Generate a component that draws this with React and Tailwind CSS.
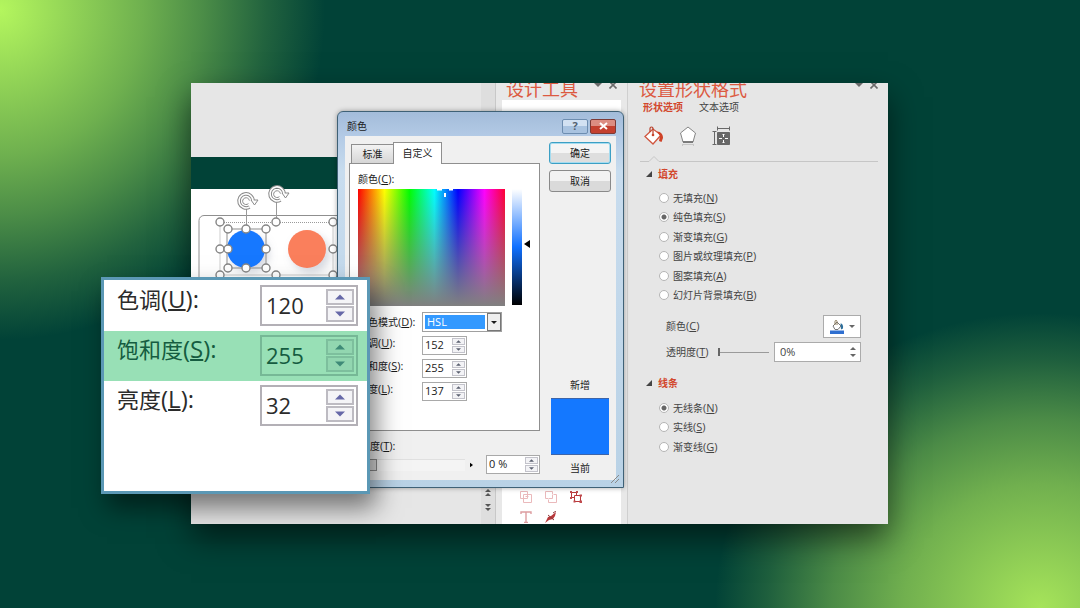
import React from "react";
import { useState } from "react";
import clsx from "clsx";

const FILL_OPTIONS = [
  { id: "none", text: "无填充", hotkey: "N" },
  { id: "solid", text: "纯色填充", hotkey: "S" },
  { id: "gradient", text: "渐变填充", hotkey: "G" },
  { id: "picture", text: "图片或纹理填充", hotkey: "P" },
  { id: "pattern", text: "图案填充", hotkey: "A" },
  { id: "background", text: "幻灯片背景填充", hotkey: "B" },
];

const LINE_OPTIONS = [
  { id: "none", text: "无线条", hotkey: "N" },
  { id: "solid", text: "实线", hotkey: "S" },
  { id: "gradient", text: "渐变线", hotkey: "G" },
];

const DIALOG_CHANNELS = [
  { id: "hue", text: "色调", hotkey: "U", value: "152" },
  { id: "sat", text: "饱和度", hotkey: "S", value: "255" },
  { id: "lum", text: "亮度", hotkey: "L", value: "137" },
];

const ZOOM_CHANNELS = [
  { id: "hue", text: "色调", hotkey: "U", value: "120" },
  { id: "sat", text: "饱和度", hotkey: "S", value: "255", active: true },
  { id: "lum", text: "亮度", hotkey: "L", value: "32" },
];

const HotkeyText = ({ text, hotkey, colon, large }) => (
  <>
    {text}
    <span className={large ? "text-[24px]" : "text-[11px]"}>
      (<u className="underline-offset-1">{hotkey}</u>){colon && ":"}
    </span>
  </>
);

const Arrow = ({ down, className }) => (
  <svg viewBox="0 0 8 4" className={className} fill="currentColor">
    <path d={down ? "M0 0h8L4 4z" : "M0 4h8L4 0z"} />
  </svg>
);

const Spinner = ({ id, value, className }) => (
  <div
    className={clsx(
      "flex h-[19px] border border-[#a9a9a9] bg-white p-px",
      className
    )}
  >
    <input
      id={id}
      defaultValue={value}
      className="min-w-0 flex-1 bg-transparent pl-px text-[11px] text-[#222] outline-none"
    />
    <div className="flex w-[13px] flex-col gap-px">
      <button
        aria-label="增加"
        className="flex flex-1 items-center justify-center border border-[#c3c3cb] bg-[#f3f3f6] text-[#5b6070]"
      >
        <Arrow className="h-[3px] w-[5px]" />
      </button>
      <button
        aria-label="减少"
        className="flex flex-1 items-center justify-center border border-[#c3c3cb] bg-[#f3f3f6] text-[#5b6070]"
      >
        <Arrow down className="h-[3px] w-[5px]" />
      </button>
    </div>
  </div>
);

const PaneControls = () => (
  <div className="flex items-center gap-[7px] text-[#6a6a6a]">
    <button aria-label="选项">
      <Arrow down className="h-[4px] w-[8px]" />
    </button>
    <button aria-label="关闭窗格">
      <svg viewBox="0 0 8 8" className="h-2 w-2" stroke="currentColor" strokeWidth="1.6">
        <path d="M0.5 0.5l7 7M7.5 0.5l-7 7" />
      </svg>
    </button>
  </div>
);

const RotateHandle = ({ x, y }) => (
  <g transform={`translate(${x} ${y})`} fill="none">
    <path d="M3.5 6A7 7 0 1 1 7 0" stroke="#8a8a8a" strokeWidth="3.6" />
    <path d="M5 -1h7L8.500 4z" fill="#fff" stroke="#8a8a8a" />
    <path d="M3.5 6A7 7 0 1 1 7 0" stroke="#fff" strokeWidth="1.6" />
    <path d="M2.4 2.6A3.4 3.4 0 1 1 3.4 -0.4" stroke="#8a8a8a" strokeWidth="1" />
  </g>
);

const Handle = ({ x, y }) => (
  <circle cx={x} cy={y} r="4" fill="#fff" stroke="#858585" strokeWidth="1.4" />
);

const SlideShapes = () => (
  <svg width="290" height="110" viewBox="0 0 290 110" className="block overflow-visible" fill="none">
    <defs>
      <filter id="dotShadow" x="-50%" y="-50%" width="200%" height="200%">
        <feDropShadow dx="4" dy="5" stdDeviation="4" floodColor="#8a93a8" floodOpacity="0.35" />
      </filter>
    </defs>
    <rect x="8" y="26.500" width="300" height="120" rx="5" stroke="#8f8f8f" />
    <circle cx="55" cy="60" r="19" fill="#1478ff" filter="url(#dotShadow)" />
    <circle cx="116" cy="60" r="19" fill="#fa7f5b" filter="url(#dotShadow)" />
    <rect x="29" y="33.5" width="113" height="52.5" stroke="#9a9a9a" strokeDasharray="1 1" />
    <rect x="36" y="40" width="39" height="39" stroke="#8d8d8d" />
    <path d="M55.500 18v20M85.500 11v20" stroke="#9a9a9a" />
    {[
      [29, 33], [85, 33], [142, 33], [29, 60], [142, 60], [29, 86], [85, 86], [142, 86],
      [37, 40], [55, 40], [75, 40], [37, 60], [75, 60], [37, 79], [55, 79], [75, 79],
    ].map(([x, y]) => (
      <Handle key={`${x}-${y}`} x={x} y={y} />
    ))}
    <RotateHandle x={55} y={12} />
    <RotateHandle x={86} y={5} />
  </svg>
);

const SlideArea = () => (
  <section className="flex min-w-0 flex-1 flex-col bg-[#e6e6e6]">
    <div className="h-[74px]" />
    <div className="h-8 bg-[#014237]" />
    <div className="h-[260px] overflow-visible bg-white">
      <SlideShapes />
    </div>
  </section>
);

const SlideScrollbar = () => (
  <div className="flex w-[15px] flex-col items-center justify-end gap-2 border-r border-[#c8c8c8] bg-[#dedede] pb-[13px] text-[#555]">
    {[false, true].map((down) => (
      <button key={String(down)} aria-label={down ? "下一张" : "上一张"} className="flex flex-col gap-px">
        <Arrow down={down} className="h-[3px] w-[6px]" />
        <Arrow down={down} className="h-[3px] w-[6px]" />
      </button>
    ))}
  </div>
);

const DesignTools = () => (
  <aside className="flex w-[132px] flex-col border-r border-[#cfcfcf] bg-[#e8e8e8] pr-[6px] pl-[6px]">
    <header className="flex h-3 items-center justify-between pr-[4px] pl-[4px]">
      <h2 className="text-[18px] leading-3 font-normal whitespace-nowrap text-[#dc5a41]">
        设计工具
      </h2>
      <div className="-mt-2">
        <PaneControls />
      </div>
    </header>
    <div className="mt-[5px] flex flex-1 items-end bg-white pb-px pl-[18px]">
      <div className="grid grid-cols-[repeat(3,12px)] gap-x-[13px] gap-y-2">
        <svg viewBox="0 0 12 12" className="h-3 w-3" fill="none" stroke="#eab9bb">
          <path d="M0.500 0.500h7v7h-7zM3.500 3.500h8v8h-8zM5.500 5.500h3" />
        </svg>
        <svg viewBox="0 0 12 12" className="h-3 w-3" fill="none" stroke="#eab9bb">
          <path d="M3.500 7.500h-3v-7h7v3M7.500 4v3.500H4M3.500 8.500v3h8v-8h-3" />
        </svg>
        <svg viewBox="0 0 12 12" className="h-3 w-3" fill="none" stroke="#b8383b">
          <path d="M1.500 1.500h5v5h-5z" />
          <path d="M4.500 4.500h6v6h-6z" fill="#fff" />
          <path d="M0 0h2v2H0zM6 0h2v2H6zM0 6h2v2H0zM9.500 3.500h2.500v2H9.500zM3.500 9.500h2v2h-2zM9.500 9.500h2.500v2.500H9.500z" fill="#c04b4e" stroke="none" />
        </svg>
        <svg viewBox="0 0 12 12" className="h-3 w-3" fill="none" stroke="#dd9da0">
          <path d="M1 3V1h10v2M6 1v10M4 11.500h4" strokeWidth="1.4" />
        </svg>
        <svg viewBox="0 0 12 12" className="h-3 w-3">
          <path d="M0 12L3 6l3-1 5-4-1 4-2 3-4 1z" fill="#b8383b" />
          <path d="M3 4l6 5M8 2l3-2" stroke="#8f3a3c" />
        </svg>
      </div>
    </div>
  </aside>
);

const SectionTitle = ({ children }) => (
  <h3 className="flex items-center gap-[6px] pl-[18px] text-[10px] leading-4 font-bold text-[#d2472c]">
    <svg viewBox="0 0 6 6" className="h-[6px] w-[6px]" fill="#444">
      <path d="M6 0v6H0z" />
    </svg>
    {children}
  </h3>
);

const RadioGroup = ({ name, options, value, onChange, className }) => (
  <div className={clsx("grid content-between pl-[31px]", className)}>
    {options.map((option) => (
      <label key={option.id} className="flex h-[15px] items-center gap-1 leading-[15px]">
        <input
          type="radio"
          name={name}
          checked={value === option.id}
          onChange={() => onChange(option.id)}
          className="h-[10px] w-[10px] appearance-none rounded-full border border-[#b5b5b5] bg-white bg-[radial-gradient(circle,#666_0_2px,#fff_3px)] not-checked:bg-none"
        />
        <span>
          <HotkeyText text={option.text} hotkey={option.hotkey} />
        </span>
      </label>
    ))}
  </div>
);

const FormatPane = () => {
  const [fill, setFill] = useState("solid");
  const [line, setLine] = useState("none");

  return (
    <aside className="w-[260px] bg-[#e6e6e6] text-[10px] text-[#444]">
      <header className="flex h-3 items-center justify-between pr-[10px] pl-[11px]">
        <h2 className="text-[18px] leading-3 font-normal whitespace-nowrap text-[#dc5a41]">
          设置形状格式
        </h2>
        <div className="-mt-2">
          <PaneControls />
        </div>
      </header>
      <nav className="mt-1 flex gap-4 pl-[15px] leading-4">
        <button className="font-bold text-[#d2472c]">形状选项</button>
        <button>文本选项</button>
      </nav>
      <div className="mt-[9px] flex h-6 items-center gap-[14px] pl-4">
        <button aria-label="填充与线条">
          <svg viewBox="0 0 20 20" className="h-5 w-5" fill="none">
            <path d="M1 10.500L9 3l8 6-8 9z" fill="#fff" stroke="#d0563f" strokeWidth="1.300" />
            <path d="M6 6V2.500c0-2 3-2 3 0V9" stroke="#b8402c" strokeWidth="1.200" />
            <circle cx="9" cy="9" r="1.300" fill="#c8452c" />
            <path d="M13 5.500c4 0 6 3 6 6.500l-1.500 4-2.500-1 1-5z" fill="#cf4227" />
          </svg>
        </button>
        <button aria-label="效果">
          <svg viewBox="0 0 20 20" className="h-5 w-5" fill="none">
            <path d="M10 1l7.500 6-2.500 9H5L2.500 7z" fill="#fff" stroke="#858585" />
            <path d="M5 16h10" stroke="#666" strokeWidth="1.500" />
            <path d="M4.500 18v2M15.500 18v2M5 18.500h10" stroke="#c6c6c6" />
          </svg>
        </button>
        <button aria-label="大小与属性">
          <svg viewBox="0 0 20 20" className="h-5 w-5" fill="none" stroke="#686868">
            <path d="M5.500 2.500h12M5.500 0.500v4M17.500 0.500v4M2.500 6v12M0.500 5.500h4M0.500 18.500h4" />
            <path d="M5.500 6.500h12v12h-12z" fill="#686868" />
            <path d="M11.500 8v3M11.500 14v3M7 12.500h3M13 12.500h3M10.500 9l1-1 1 1M10.500 16l1 1 1-1" stroke="#fff" />
          </svg>
        </button>
      </div>
      <div className="flex h-[14px] items-end pl-3">
        <svg viewBox="0 0 26 6" className="h-[6px] w-[26px]" fill="none" stroke="#c6c6c6">
          <path d="M0 5.500h9L14 0.500l5 5h7" />
        </svg>
        <div className="mr-[10px] flex-1 border-b border-[#c6c6c6]" />
      </div>

      <div className="mt-1">
        <SectionTitle>填充</SectionTitle>
      </div>
      <RadioGroup
        name="fill"
        options={FILL_OPTIONS}
        value={fill}
        onChange={setFill}
        className="mt-2 h-[113px]"
      />
      <div className="mt-[12px] flex h-[23px] items-center justify-between pr-[27px] pl-[38px]">
        <span>
          <HotkeyText text="颜色" hotkey="C" />
        </span>
        <button
          aria-label="填充颜色"
          className="flex h-[23px] w-[38px] items-center justify-center gap-[5px] border border-[#ababab] bg-white text-[#666]"
        >
          <svg viewBox="0 0 14 14" className="h-[14px] w-[14px]" fill="none">
            <path d="M0 10.500h14V14H0z" fill="#2f6fd0" />
            <path d="M3 6l4-4 4 4-3 3.500H5z" fill="#fff" stroke="#777" />
            <path d="M5 5V1.500c0-1.500 2-1.500 2 0V5" stroke="#8a7a5a" />
            <path d="M10.500 3.500c2 0 3 2 2.500 5l-2 1z" fill="#2c6f9c" />
          </svg>
          <Arrow down className="h-[3px] w-[6px]" />
        </button>
      </div>
      <div className="mt-[4px] flex h-[20px] items-center pr-[27px] pl-[38px]">
        <label htmlFor="pane-alpha" className="whitespace-nowrap">
          <HotkeyText text="透明度" hotkey="T" />
        </label>
        <input
          type="range"
          aria-label="透明度"
          defaultValue="0"
          className="mr-[5px] ml-[9px] h-2 min-w-0 flex-1 appearance-none bg-[linear-gradient(#9a9a9a,#9a9a9a)] bg-[length:100%_1px] bg-center bg-no-repeat [&::-webkit-slider-thumb]:h-2 [&::-webkit-slider-thumb]:w-[2px] [&::-webkit-slider-thumb]:appearance-none [&::-webkit-slider-thumb]:bg-[#666]"
        />
        <div className="flex h-[20px] w-[87px] items-center border border-[#ababab] bg-white pr-1 pl-[5px]">
          <input
            id="pane-alpha"
            defaultValue="0%"
            className="min-w-0 flex-1 text-[11px] outline-none"
          />
          <div className="flex flex-col gap-1 text-[#666]">
            <button aria-label="增加">
              <Arrow className="h-[3px] w-[6px]" />
            </button>
            <button aria-label="减少">
              <Arrow down className="h-[3px] w-[6px]" />
            </button>
          </div>
        </div>
      </div>

      <div className="mt-[13px]">
        <SectionTitle>线条</SectionTitle>
      </div>
      <RadioGroup
        name="line"
        options={LINE_OPTIONS}
        value={line}
        onChange={setLine}
        className="mt-[9px] h-[54px]"
      />
    </aside>
  );
};

const ColorSpectrum = () => (
  <div className="flex">
    <div className="relative h-[117px] w-[147px] bg-[linear-gradient(to_bottom,transparent,#808080),linear-gradient(to_right,#f00,#ff0_18%,#0f0_35%,#0ff_52%,#00f_68%,#f0f_86%,#f03)]">
      <svg viewBox="0 0 16 10" className="absolute top-0 left-[79px] h-[10px] w-4" fill="none" stroke="#fff" strokeWidth="2">
        <path d="M0 0.500h5M12 0.500h4M8 4v4" />
      </svg>
    </div>
    <div className="ml-[7px] h-[116px] w-[10px] bg-[linear-gradient(#fff,#1070ff_50%,#000)]" />
    <svg viewBox="0 0 6 8" className="mt-[51px] ml-[2px] h-2 w-[6px]">
      <path d="M6 0v8L0 4z" />
    </svg>
  </div>
);

const CustomTab = () => (
  <div className="h-[268px] border border-[#8f8f8f] bg-white pt-2 pl-2">
    <p className="leading-[14px]">
      <HotkeyText text="颜色" hotkey="C" colon />
    </p>
    <div className="mt-[3px]">
      <ColorSpectrum />
    </div>
    <div className="mt-[6px] flex h-[20px] items-center">
      <label htmlFor="model" className="w-16 whitespace-nowrap">
        <HotkeyText text="颜色模式" hotkey="D" colon />
      </label>
      <div className="flex h-[20px] w-20 items-stretch border border-[#a0a0a0] bg-white">
        <select
          id="model"
          className="m-[2px] min-w-0 flex-1 appearance-none bg-[#3399ff] pl-[2px] text-[11px] leading-[14px] text-white outline-none"
        >
          <option>HSL</option>
        </select>
        <span className="flex w-[14px] items-center justify-center border border-[#777] bg-[#eee]">
          <Arrow down className="h-[3px] w-[6px]" />
        </span>
      </div>
    </div>
    <div className="mt-1 flex flex-col gap-1">
      {DIALOG_CHANNELS.map((channel) => (
        <div key={channel.id} className="flex h-[19px] items-start">
          <label htmlFor={`dialog-${channel.id}`} className="w-16 leading-[14px] whitespace-nowrap">
            <HotkeyText text={channel.text} hotkey={channel.hotkey} colon />
          </label>
          <Spinner id={`dialog-${channel.id}`} value={channel.value} className="w-[45px]" />
        </div>
      ))}
    </div>
  </div>
);

const ColorDialog = () => (
  <div
    role="dialog"
    aria-label="颜色"
    className="absolute top-[28px] left-[146px] w-[287px] rounded-t-[6px] border border-[#3f6176] bg-[linear-gradient(#a3bcda,#b4cbe6_26px,#c8dcee_60px,#b9d2e6)] px-[7px] pb-[7px] text-[10px] text-[#1a1a1a] shadow-[0_0_5px_rgba(0,0,0,0.35)]"
  >
    <header className="flex h-6 items-center justify-between pt-[4px] pl-[2px]">
      <h2 className="leading-4">颜色</h2>
      <div className="flex gap-[2px]">
        <button
          aria-label="帮助"
          className="h-[15px] w-[26px] rounded-[2px] border border-[#6d8db0] bg-[linear-gradient(#d2e1f2_50%,#a9c3e0_50%)] text-[11px] leading-[12px] font-bold text-[#53616f]"
        >
          ?
        </button>
        <button
          aria-label="关闭"
          className="flex h-[15px] w-[26px] items-center justify-center rounded-[2px] border border-[#7d3a36] bg-[linear-gradient(#dc8d82_50%,#c4402f_50%)]"
        >
          <svg viewBox="0 0 9 8" className="h-2 w-[9px]" stroke="#fff" strokeWidth="2">
            <path d="M1 1l7 6M8 1l-7 6" />
          </svg>
        </button>
      </div>
    </header>
    <div className="flex h-[344px] gap-[9px] bg-[#f0f0f0] pt-[6px] pr-[5px] pl-1">
      <div className="flex min-w-0 flex-1 flex-col">
        <div className="flex items-end pl-[2px]">
          <button className="h-[19px] w-[43px] border border-b-0 border-[#8f8f8f] bg-linear-to-b from-[#f3f3f3] to-[#d6d6d6]">
            标准
          </button>
          <button className="relative -mb-px -ml-px h-[22px] w-[49px] border border-b-0 border-[#8f8f8f] bg-white">
            自定义
          </button>
        </div>
        <CustomTab />
        <div className="mt-2 pl-px leading-[14px]">
          <label htmlFor="dialog-alpha">
            <HotkeyText text="透明度" hotkey="T" colon />
          </label>
        </div>
        <div className="mt-[2px] flex h-[19px] items-center">
          <input
            type="range"
            aria-label="透明度"
            defaultValue="14"
            className="h-3 w-[116px] appearance-none border-t border-[#e0e0e0] bg-[#f4f4f4] [&::-webkit-slider-thumb]:h-3 [&::-webkit-slider-thumb]:w-[14px] [&::-webkit-slider-thumb]:appearance-none [&::-webkit-slider-thumb]:border [&::-webkit-slider-thumb]:border-[#8a8a8a] [&::-webkit-slider-thumb]:bg-[#dcdcdc]"
          />
          <svg viewBox="0 0 4 6" className="ml-[5px] h-[6px] w-[3px]">
            <path d="M0 0v6l4-3z" />
          </svg>
          <Spinner id="dialog-alpha" value="0 %" className="ml-auto w-[54px]" />
        </div>
      </div>
      <div className="flex w-[62px] flex-col items-center">
        <button className="h-[22px] w-full rounded-[3px] border border-[#3c9fc4] bg-[linear-gradient(#f4f4f4_50%,#dedede_50%)] shadow-[inset_0_0_0_1px_#a5dcf0]">
          确定
        </button>
        <button className="mt-[6px] h-[22px] w-full rounded-[3px] border border-[#8a8a8a] bg-[linear-gradient(#f2f2f2_50%,#dadada_50%)]">
          取消
        </button>
        <span className="mt-auto leading-4">新增</span>
        <div className="mt-[5px] h-[57px] w-[58px] border-y border-[#3d64a8] bg-[#1478ff]" />
        <span className="mt-[5px] mb-1 leading-4">当前</span>
      </div>
    </div>
    <svg viewBox="0 0 8 8" className="absolute right-[4px] bottom-[4px] h-2 w-2" stroke="#8a8a8a">
      <path d="M0 8l8-8M4 8l4-4" />
    </svg>
  </div>
);

const ZoomCallout = () => (
  <div className="absolute top-[277px] left-[101px] h-[217px] w-[269px] border-[3px] border-[#5b98b5] bg-white pt-px text-[22px] text-[#2b2b2b] shadow-[6px_14px_24px_rgba(0,0,0,0.5)]">
    {ZOOM_CHANNELS.map((channel) => (
      <div
        key={channel.id}
        className={clsx(
          "flex h-[50px] items-start justify-between pt-1 pr-[9px] pl-[13px]",
          channel.active && "bg-[#98e0b6] text-[#155c40]"
        )}
      >
        <label htmlFor={`zoom-${channel.id}`} className="leading-7 whitespace-nowrap">
          <HotkeyText text={channel.text} hotkey={channel.hotkey} colon large />
        </label>
        <div
          className={clsx(
            "flex h-[41px] w-[98px] border-2 p-[2px]",
            channel.active ? "border-[#76b896]" : "border-[#b3b0b6]"
          )}
        >
          <input
            id={`zoom-${channel.id}`}
            defaultValue={channel.value}
            className="min-w-0 flex-1 bg-transparent pl-[2px] text-[22px] outline-none"
          />
          <div
            className={clsx(
              "flex w-7 flex-col gap-px",
              channel.active ? "text-[#3f8a77]" : "text-[#6668a8]"
            )}
          >
            {[false, true].map((down) => (
              <button
                key={String(down)}
                aria-label={down ? "减少" : "增加"}
                className={clsx(
                  "flex flex-1 items-center justify-center border-2",
                  channel.active
                    ? "border-[#7dbf9d] bg-[#92d6b0]"
                    : "border-[#bdbbc2] bg-[#f4f4f7]"
                )}
              >
                <Arrow down={down} className="h-[6px] w-[10px]" />
              </button>
            ))}
          </div>
        </div>
      </div>
    ))}
  </div>
);

const App = () => {
  return (
    <div className="relative flex min-h-screen overflow-hidden bg-[#014237] bg-[radial-gradient(ellipse_325px_330px_at_0_10px,#b4f65e,rgba(180,246,94,0.61)_44%,rgba(180,246,94,0.42)_62%,rgba(180,246,94,0.18)_82%,transparent),radial-gradient(ellipse_325px_295px_at_1040px_608px,#a6e45a,rgba(166,228,90,0.68)_42%,rgba(166,228,90,0.45)_64%,rgba(166,228,90,0.18)_84%,transparent)] pt-[83px] pr-[192px] pb-[84px] pl-[191px] font-['Open_Sans','Noto_Sans_CJK_SC',sans-serif]">
      <main className="flex min-w-0 flex-1 shadow-[0_14px_30px_rgba(0,0,0,0.55)]">
        <div className="relative flex min-w-0 flex-1 overflow-hidden">
          <SlideArea />
          <SlideScrollbar />
          <DesignTools />
          <FormatPane />
          <ColorDialog />
        </div>
      </main>
      <ZoomCallout />
    </div>
  );
};

export default App;
